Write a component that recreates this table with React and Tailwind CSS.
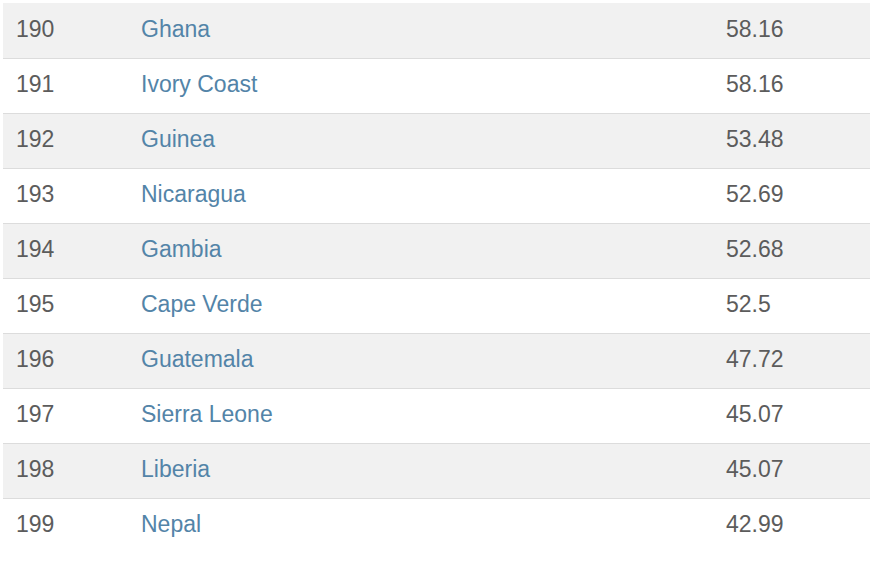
import React from 'react';

const rows = [
  ['190', 'Ghana', '58.16'],
  ['191', 'Ivory Coast', '58.16'],
  ['192', 'Guinea', '53.48'],
  ['193', 'Nicaragua', '52.69'],
  ['194', 'Gambia', '52.68'],
  ['195', 'Cape Verde', '52.5'],
  ['196', 'Guatemala', '47.72'],
  ['197', 'Sierra Leone', '45.07'],
  ['198', 'Liberia', '45.07'],
  ['199', 'Nepal', '42.99'],
];

export default function App() {
  return (
    <div className="w-[875px] h-[561px] bg-white pt-[3px] pl-[3px]" style={{ fontFamily: '"Liberation Sans", Arial, sans-serif' }}>
      <div className="w-[867px] flex flex-col">
        {rows.map(([rank, name, score], i) => (
          <div
            key={rank}
            className={`h-[55px] flex items-center text-[23px] text-[#5c5c5c] ${i > 0 ? 'border-t border-[#dcdcdc]' : ''} ${i % 2 === 0 ? 'bg-[#f1f1f1]' : 'bg-white'}`}
          >
            <div className="w-[138px] pl-[13px] pb-[3px]">{rank}</div>
            <div className="flex-1 pb-[3px] text-[#5384a8]">{name}</div>
            <div className="w-[144px] pb-[3px]">{score}</div>
          </div>
        ))}
      </div>
    </div>
  );
}
